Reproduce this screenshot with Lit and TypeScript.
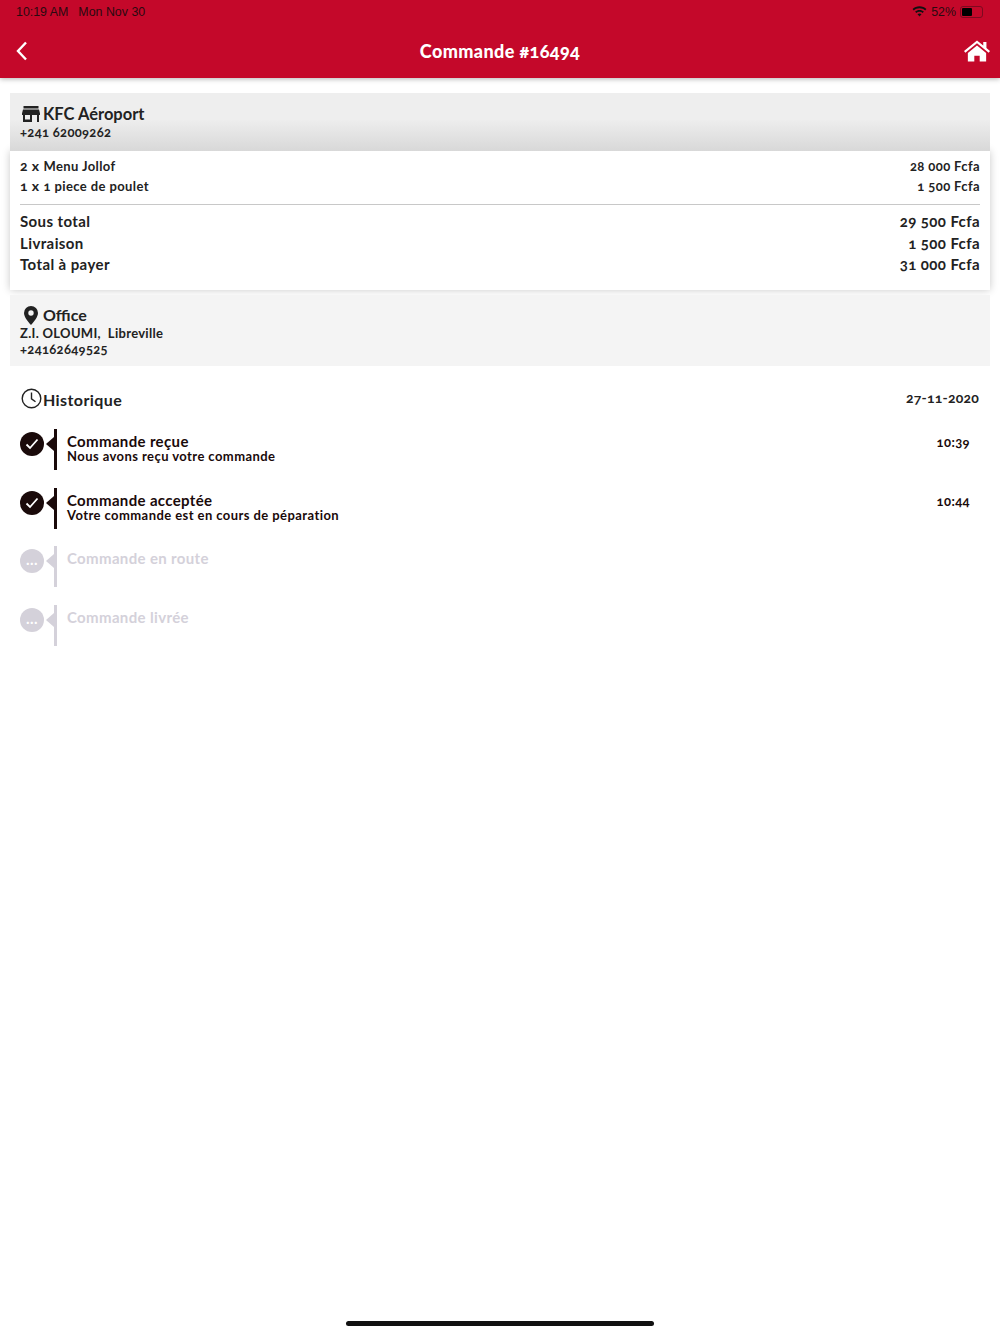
import { LitElement, html, css, svg } from 'lit';
import { customElement } from 'lit/decorators.js';

const lines = [
  { qty: '2 x', name: 'Menu Jollof', price: '28 000 Fcfa' },
  { qty: '1 x', name: '1 piece de poulet', price: '1 500 Fcfa' },
];

const totals = [
  { label: 'Sous total', value: '29 500 Fcfa' },
  { label: 'Livraison', value: '1 500 Fcfa' },
  { label: 'Total à payer', value: '31 000 Fcfa' },
];

const steps = [
  { title: 'Commande reçue', sub: 'Nous avons reçu votre commande', time: '10:39', done: true },
  { title: 'Commande acceptée', sub: 'Votre commande est en cours de péparation', time: '10:44', done: true },
  { title: 'Commande en route', sub: '', time: '', done: false },
  { title: 'Commande livrée', sub: '', time: '', done: false },
];

const wifi = svg`<svg width="15" height="11" viewBox="0 0 15 11"><path d="M7.5 2.2c2.2 0 4.200.8 5.700 2.200l1.200-1.300C12.600 1.300 10.200.3 7.500.3S2.400 1.300.6 3.100l1.200 1.300C3.300 3 5.300 2.200 7.500 2.200zM7.500 5.700c1.200 0 2.300.4 3.200 1.200l1.200-1.300c-1.200-1.100-2.700-1.700-4.400-1.700s-3.200.6-4.400 1.700l1.200 1.300c.9-.8 2-1.200 3.200-1.200zM7.500 7.500c-.8 0-1.500.3-2 .8l2 2.200 2-2.200c-.5-.5-1.200-.8-2-.8z" fill="#111"/></svg>`;

const back = svg`<svg width="12" height="20" viewBox="0 0 12 20"><path d="M10 1.500 2 10l8 8.500" fill="none" stroke="#fff" stroke-width="2.400"/></svg>`;

const home = svg`<svg width="26" height="22" viewBox="0 0 27 22"><path d="M13.500 0 20 5.300V1.600h3.300v6.400L27 11l-1.400 1.700L13.500 2.900 1.400 12.700 0 11z" fill="#fff"/><path d="M13.500 5.200 23 13v9h-6.700v-6h-5.600v6H4v-9z" fill="#fff"/></svg>`;

const store = svg`<svg width="18" height="16" viewBox="0 0 18 16"><path d="M1.500 0h15v2.500h-15zM1 3.500h16l1 4v1.500H0V7.500z" fill="#222"/><path d="M1 9h2v7H1zM15 9h2v7h-2zM3 13.500h7V16H3zM8 9h2v5H8z" fill="#222"/></svg>`;

const pin = svg`<svg width="14" height="19" viewBox="0 0 14 19"><path fill-rule="evenodd" d="M7 0a7 7 0 0 1 7 7c0 4-4 8.500-7 12C4 15.500 0 11 0 7a7 7 0 0 1 7-7zm0 4.300a2.700 2.700 0 1 0 0 5.400 2.700 2.700 0 0 0 0-5.400z" fill="#222"/></svg>`;

const clock = svg`<svg width="21" height="21" viewBox="0 0 21 21"><circle cx="10.500" cy="10.500" r="9.300" fill="none" stroke="#222" stroke-width="1.400"/><path d="M10.500 4.500v6.300l4 3" fill="none" stroke="#222" stroke-width="1.400"/></svg>`;

const check = svg`<svg width="14" height="12" viewBox="0 0 14 12"><path d="M1.500 6.500 5 10l7.500-8.500" fill="none" stroke="#fff" stroke-width="1.800"/></svg>`;

@customElement('app-root')
export class AppRoot extends LitElement {
  static styles = css`
    :host {
      display: flex;
      flex-direction: column;
      min-height: 1334px;
      background: #fff;
      font-family: 'Lato', 'Open Sans', sans-serif;
      font-weight: 700;
      font-variant-numeric: oldstyle-nums;
      color: #222;
    }
    .topbar {
      height: 78px;
      flex: none;
      background: #c4082a;
      box-shadow: 0 1px 5px rgba(0, 0, 0, 0.3);
      display: flex;
      flex-direction: column;
    }
    .status {
      height: 23px;
      padding: 0 16px;
      display: flex;
      align-items: center;
      justify-content: space-between;
      font-family: 'Liberation Sans', sans-serif;
      font-weight: 400;
      font-size: 12.400px;
      font-variant-numeric: normal;
      color: #2a0a10;
    }
    .status-left {
      display: flex;
      gap: 10px;
    }
    .status-right {
      display: flex;
      align-items: center;
      gap: 4px;
    }
    .battery {
      width: 23px;
      height: 12px;
      box-sizing: border-box;
      border: 1px solid #7d0a20;
      border-radius: 3px;
      padding: 1px;
      display: flex;
      margin-right: 1px;
    }
    .battery i {
      width: 52%;
      background: #000;
      border-radius: 1px;
    }
    .nav {
      flex: 1;
      padding: 0 10px 0 16px;
      display: grid;
      grid-template-columns: 54px 1fr 60px;
      align-items: center;
    }
    .nav h1 {
      margin: 0;
      text-align: center;
      color: #fff;
      font-size: 18px;
      font-weight: 900;
      letter-spacing: 0.4px;
    }
    .nav .home {
      justify-self: end;
      display: flex;
    }
    .content {
      padding: 15px 10px 0;
      display: flex;
      flex-direction: column;
    }
    .store {
      height: 58px;
      box-sizing: border-box;
      padding: 10px 10px 0;
      background: linear-gradient(#eee 0 45%, #d8d8d8);
      position: relative;
      z-index: 1;
    }
    .head {
      display: flex;
      align-items: center;
      gap: 1px;
      font-size: 16.500px;
      line-height: 22px;
    }
    .head .ico {
      width: 22px;
      flex: none;
      display: flex;
      justify-content: center;
    }
    .small {
      font-size: 13px;
      line-height: 15px;
      letter-spacing: 0.3px;
    }
    .bill {
      padding: 6px 10px 14.500px;
      background: #fff;
      box-shadow: 0 0 8px rgba(0, 0, 0, 0.22);
    }
    .row {
      display: flex;
      justify-content: space-between;
      font-size: 13px;
      line-height: 19.500px;
      height: 19.500px;
      letter-spacing: 0.4px;
    }
    .row .qty {
      font-size: 14px;
      line-height: 1;
      margin-right: 4px;
    }
    .rule {
      height: 1px;
      margin: 8px 0 6px;
      background: #c8c8c8;
    }
    .row.total {
      font-size: 15px;
      line-height: 21.500px;
      height: 21.500px;
    }
    .address {
      margin-top: 5px;
      height: 71px;
      box-sizing: border-box;
      padding: 9px 10px 0;
      background: #f4f4f4;
    }
    .address .small {
      line-height: 15.500px;
    }
    .address .head {
      font-size: 16px;
    }
    .history {
      margin-top: 22px;
      padding: 0 11px 0 10px;
      display: flex;
      align-items: center;
      justify-content: space-between;
    }
    .history .head {
      font-size: 16px;
      letter-spacing: 0.4px;
    }
    .history .ico {
      margin-bottom: 2px;
    }
    .history .date {
      font-size: 14px;
      letter-spacing: 0.2px;
      margin-bottom: 4px;
    }
    .steps {
      margin-top: 18px;
      padding: 0 20px 0 10px;
      display: flex;
      flex-direction: column;
    }
    .step {
      height: 58.600px;
      display: flex;
      color: #1a0a0a;
    }
    .step.todo {
      color: #d4d1da;
    }
    .dot {
      width: 24px;
      height: 24px;
      margin-top: 3px;
      flex: none;
      border-radius: 50%;
      background: currentColor;
      display: flex;
      align-items: center;
      justify-content: center;
    }
    .dots {
      color: #fff;
      font-size: 15px;
      letter-spacing: 0.5px;
      line-height: 24px;
      margin-bottom: 4px;
    }
    .arrow {
      width: 0;
      height: 0;
      margin: 8px 0 0 2px;
      flex: none;
      border: 7px solid transparent;
      border-left-width: 0;
      border-right: 8px solid currentColor;
    }
    .bar {
      width: 3px;
      height: 41px;
      flex: none;
      background: currentColor;
    }
    .text {
      flex: 1;
      margin-left: 10px;
    }
    .title {
      font-size: 15px;
      line-height: 18px;
      margin-top: 3px;
      letter-spacing: 0.35px;
    }
    .sub {
      font-size: 13px;
      line-height: 13px;
      letter-spacing: 0.43px;
    }
    .time {
      font-size: 13px;
      line-height: 18px;
      margin-top: 4px;
      letter-spacing: 0.4px;
    }
    .indicator {
      width: 308px;
      height: 5px;
      margin: auto auto 8px;
      border-radius: 3px;
      background: #111;
    }
  `;

  render() {
    return html`
      <header class="topbar">
        <div class="status">
          <div class="status-left"><span>10:19 AM</span><span>Mon Nov 30</span></div>
          <div class="status-right">${wifi}<span>52%</span><span class="battery"><i></i></span></div>
        </div>
        <div class="nav">
          ${back}
          <h1>Commande #16494</h1>
          <span class="home">${home}</span>
        </div>
      </header>
      <main class="content">
        <section class="store">
          <div class="head"><span class="ico">${store}</span>KFC Aéroport</div>
          <div class="small">+241 62009262</div>
        </section>
        <section class="bill">
          ${lines.map(
            (l) => html`<div class="row">
              <span><span class="qty">${l.qty}</span>${l.name}</span><span>${l.price}</span>
            </div>`
          )}
          <div class="rule"></div>
          ${totals.map(
            (t) => html`<div class="row total"><span>${t.label}</span><span>${t.value}</span></div>`
          )}
        </section>
        <section class="address">
          <div class="head"><span class="ico">${pin}</span>Office</div>
          <div class="small">Z.I. OLOUMI,&nbsp; Libreville</div>
          <div class="small">+24162649525</div>
        </section>
        <section class="history">
          <div class="head"><span class="ico">${clock}</span>Historique</div>
          <span class="date">27-11-2020</span>
        </section>
        <section class="steps">
          ${steps.map(
            (s) => html`<div class="step ${s.done ? '' : 'todo'}">
              <span class="dot">${s.done ? check : html`<span class="dots">...</span>`}</span>
              <span class="arrow"></span>
              <span class="bar"></span>
              <div class="text">
                <div class="title">${s.title}</div>
                ${s.sub ? html`<div class="sub">${s.sub}</div>` : ''}
              </div>
              ${s.time ? html`<span class="time">${s.time}</span>` : ''}
            </div>`
          )}
        </section>
      </main>
      <div class="indicator"></div>
    `;
  }
}
